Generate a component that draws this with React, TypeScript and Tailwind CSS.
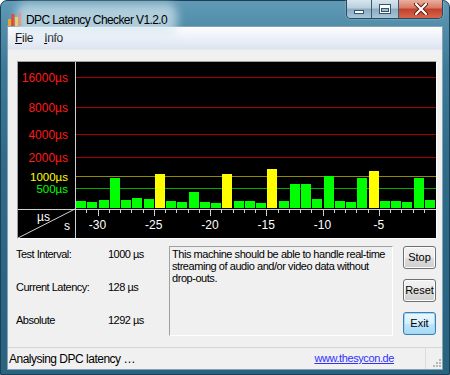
const ui = "font-['Liberation_Sans',Arial,sans-serif]";

// page y of each bar top, baseline at y=208
const bars: [number, "g" | "y"][] = [
  [201, "g"], [202, "g"], [200, "g"], [178, "g"], [200, "g"], [198, "g"], [199, "g"], [174, "y"],
  [201, "g"], [202, "g"], [192, "g"], [202, "g"], [203, "g"], [174, "y"], [201, "g"], [201, "g"],
  [203, "g"], [169, "y"], [201, "g"], [184, "g"], [184, "g"], [199, "g"], [176, "g"], [201, "g"],
  [202, "g"], [178, "g"], [171, "y"], [201, "g"], [201, "g"], [202, "g"], [178, "g"], [200, "g"],
];

const grid = [
  { y: 15, label: "16000µs", line: "#a80000", text: "#ff1a1a" },
  { y: 45, label: "8000µs", line: "#a80000", text: "#ff1a1a" },
  { y: 72, label: "4000µs", line: "#a80000", text: "#ff1a1a" },
  { y: 95, label: "2000µs", line: "#a80000", text: "#ff1a1a" },
  { y: 114, label: "1000µs", line: "#8c8c00", text: "#ffff00" },
  { y: 126, label: "500µs", line: "#00b000", text: "#00ff00" },
];

function Chart() {
  const step = 11.25;
  return (
    <div className="w-[420px] h-[178px] border-t border-l border-[#a0a0a0] border-r border-b border-r-white border-b-white">
      <svg width="418" height="176" viewBox="0 0 418 176" className="block bg-black" fontFamily="'Liberation Sans', Arial, sans-serif" fontSize="12">
        {grid.map((g) => (
          <g key={g.label}>
            <line x1="57" x2="418" y1={g.y + 0.5} y2={g.y + 0.5} stroke={g.line} />
            <text x="50" y={g.y + 4.5} textAnchor="end" fill={g.text} fontSize={g.y > 100 ? 11.5 : 12}>{g.label}</text>
          </g>
        ))}
        {bars.map(([top, c], i) => (
          <rect
            key={i}
            x={Math.round(57 + i * step + 1)}
            y={top - 62}
            width="10"
            height={208 - top}
            fill={c === "y" ? "#ffff00" : "#00ff00"}
            shapeRendering="crispEdges"
          />
        ))}
        <line x1="57.5" x2="57.5" y1="0" y2="176" stroke="#d0d0d0" />
        <line x1="0" x2="418" y1="147.5" y2="147.5" stroke="#d0d0d0" />
        {Array.from({ length: 31 }, (_, k) => k + 1).map((k) => {
          const x = Math.round(57 + k * step) + 0.5;
          const major = (32 - k) % 5 === 0;
          return <line key={k} x1={x} x2={x} y1="148" y2={major ? 154 : 151} stroke="#d0d0d0" />;
        })}
        {[30, 25, 20, 15, 10, 5].map((n) => (
          <text key={n} x={57 + (32 - n) * step} y="167" textAnchor="middle" fill="#ffffff">-{n}</text>
        ))}
        <line x1="0" y1="176" x2="57" y2="147" stroke="#d0d0d0" />
        <text x="19" y="159" fill="#ffffff">µs</text>
        <text x="46" y="168" fill="#ffffff">s</text>
      </svg>
    </div>
  );
}

function WinButton({ label, focus }: { label: string; focus?: boolean }) {
  return (
    <div
      className={
        "w-[33px] h-[23px] rounded-[3px] flex items-center justify-center text-[11px] text-black " +
        (focus
          ? "border border-[#3c7fb1] shadow-[inset_0_0_0_1px_#9fd8f2] bg-[linear-gradient(180deg,#eaf6fd_0%,#d9f0fc_50%,#bee6fd_51%,#a7d9f5_100%)]"
          : "border border-[#707070] shadow-[inset_0_0_0_1px_#fcfcfc] bg-[linear-gradient(180deg,#f2f2f2_0%,#ebebeb_50%,#dddddd_51%,#cfcfcf_100%)]")
      }
    >
      {label}
    </div>
  );
}

export default function App() {
  return (
    <div className={"w-[450px] h-[375px] overflow-hidden bg-[#ffffff] " + ui}>
      <div className="w-[450px] h-[375px] rounded-t-[7px] border border-[#1d3f55] bg-[linear-gradient(180deg,#5f99b5_0%,#3b7a98_18%,#2d6b88_45%,#286380_100%)] flex flex-col">
        {/* title bar */}
        <div className="h-[25px] flex items-start justify-between">
          <div className="flex items-center pl-[7px] pt-[6px]">
            <svg width="14" height="13" viewBox="0 0 14 13" className="mt-[1px]">
              <rect x="0" y="6" width="3" height="7" fill="#f0a020" />
              <rect x="3.5" y="1" width="3" height="12" fill="#e52b1c" />
              <rect x="7" y="4" width="3" height="9" fill="#f4c21c" />
              <rect x="10.5" y="0" width="3" height="13" fill="#e0401c" />
            </svg>
            <div className="relative ml-[4px]">
              <div className="absolute -inset-x-[10px] -inset-y-[4px] rounded-[10px] bg-[#d6e7f0]/70 blur-[5px]" />
              <span className="relative text-[12px] tracking-[-0.6px] text-black leading-[14px]">DPC Latency Checker V1.2.0</span>
            </div>
          </div>
          <div className="flex mr-[6px] -mt-[1px] h-[19px] rounded-b-[5px] border border-[#2a4a5e] border-t-0 overflow-hidden shadow-[0_0_2px_rgba(255,255,255,0.5)]">
            <div className="w-[25px] h-full flex items-end justify-center pb-[4px] border-r border-[#3a5a6e] bg-[linear-gradient(180deg,#d6e5ee_0%,#b9cfdd_45%,#8caac0_50%,#a8c6d9_100%)]">
              <div className="w-[10px] h-[4px] bg-white border border-[#35546a]" />
            </div>
            <div className="w-[27px] h-full flex items-center justify-center border-r border-[#3a5a6e] bg-[linear-gradient(180deg,#d6e5ee_0%,#b9cfdd_45%,#8caac0_50%,#a8c6d9_100%)]">
              <div className="w-[12px] h-[10px] border border-[#35546a] bg-white p-[1px] pt-[3px]">
                <div className="w-full h-full bg-[#9fbdd0] border border-[#35546a]" />
              </div>
            </div>
            <div className="w-[43px] h-full flex items-center justify-center bg-[linear-gradient(180deg,#eab0a0_0%,#d77862_45%,#c2412b_50%,#d8654c_100%)]">
              <svg width="14" height="12" viewBox="0 0 14 12">
                <path d="M2 1 L12 11 M12 1 L2 11" stroke="#5a1a10" strokeWidth="4" strokeLinecap="round" />
                <path d="M2 1 L12 11 M12 1 L2 11" stroke="#ffffff" strokeWidth="2.2" strokeLinecap="round" />
              </svg>
            </div>
          </div>
        </div>

        {/* client area */}
        <div className="mx-[6px] flex flex-col border border-[#86a3b6] bg-[#f0f0f0]">
          {/* menu */}
          <div className="h-[23px] flex items-center gap-[11px] pl-[7px] text-[12px] tracking-[-0.3px] text-black border-b border-[#e3e7ef] bg-[linear-gradient(180deg,#fcfdfe_0%,#eef2f9_45%,#dde4f1_100%)]">
            <span><span className="underline">F</span>ile</span>
            <span><span className="underline">I</span>nfo</span>
          </div>

          {/* content */}
          <div className="h-[297px] flex flex-col pt-[11px] pl-[9px]">
            <Chart />
            <div className="flex mt-[7px] ml-[-1px]">
              <div className="w-[153px] flex flex-col gap-[19px] pt-[1px] text-[11px] tracking-[-0.5px] text-black leading-[14px]">
                {[
                  ["Test Interval:", "1000 µs"],
                  ["Current Latency:", "128 µs"],
                  ["Absolute", "1292 µs"],
                ].map(([k, v]) => (
                  <div key={k} className="flex">
                    <span className="w-[92px]">{k}</span>
                    <span>{v}</span>
                  </div>
                ))}
              </div>
              <div className="w-[224px] h-[90px] border-t border-l border-[#a0a0a0] border-r border-b border-r-white border-b-white pt-[1px] pl-[2px] text-[11px] leading-[12px] tracking-[-0.45px] text-black">
                This machine should be able to handle real-time
                <br />
                streaming of audio and/or video data without
                <br />
                drop-outs.
              </div>
              <div className="ml-[10px] flex flex-col gap-[10px]">
                <WinButton label="Stop" />
                <WinButton label="Reset" />
                <WinButton label="Exit" focus />
              </div>
            </div>
          </div>

          {/* status bar */}
          <div className="h-[22px] flex items-center border-t border-[#d7d7d7] text-[12px] tracking-[-0.5px] text-black">
            <span className="flex-1 pl-[1px]">Analysing DPC latency …</span>
            <span className="text-[#3030ff] underline text-[11px] tracking-[-0.4px] mr-[31px]">www.thesycon.de</span>
            <div className="w-[1px] h-full bg-[#dcdcdc]" />
            <div className="w-[16px] h-full flex items-end justify-end pb-[2px] pr-[1px]">
              <svg width="10" height="10" viewBox="0 0 10 10">
                {[[8, 2], [8, 5], [5, 5], [8, 8], [5, 8], [2, 8]].map(([x, y], i) => (
                  <rect key={i} x={x} y={y} width="2" height="2" fill="#b8b8b8" />
                ))}
              </svg>
            </div>
          </div>
        </div>
        <div className="flex-1" />
      </div>
    </div>
  );
}
